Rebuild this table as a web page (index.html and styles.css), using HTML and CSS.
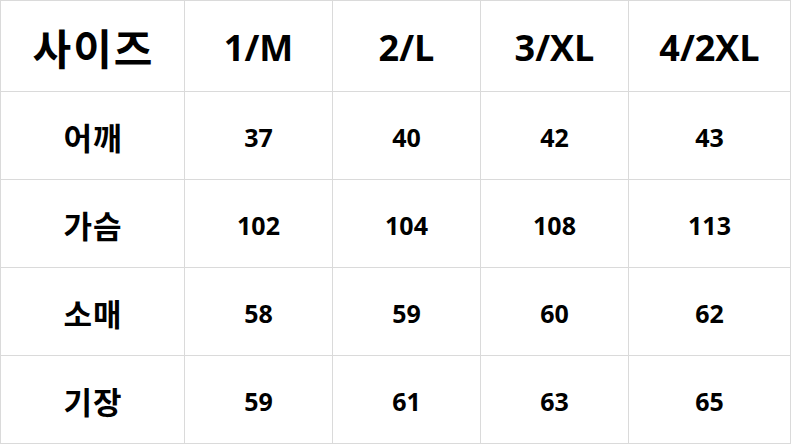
FILE: index.html
```html
<!DOCTYPE html>
<html lang="ko">
<head>
<meta charset="utf-8">
<title>사이즈</title>
<link rel="stylesheet" href="styles.css">
</head>
<body>
<table class="size-table">
  <colgroup>
    <col class="c-label">
    <col class="c-size">
    <col class="c-size">
    <col class="c-size">
    <col class="c-last">
  </colgroup>
  <tr class="head-row">
    <th class="ko-head">사이즈</th>
    <th>1/M</th>
    <th>2/L</th>
    <th>3/XL</th>
    <th>4/2XL</th>
  </tr>
  <tr class="body-row">
    <th class="ko-label">어깨</th>
    <td>37</td><td>40</td><td>42</td><td>43</td>
  </tr>
  <tr class="body-row">
    <th class="ko-label">가슴</th>
    <td>102</td><td>104</td><td>108</td><td>113</td>
  </tr>
  <tr class="body-row">
    <th class="ko-label">소매</th>
    <td>58</td><td>59</td><td>60</td><td>62</td>
  </tr>
  <tr class="body-row">
    <th class="ko-label">기장</th>
    <td>59</td><td>61</td><td>63</td><td>65</td>
  </tr>
</table>
</body>
</html>
```
FILE: styles.css
```css
html, body {
  margin: 0;
  padding: 0;
  background: #ffffff;
}

.size-table {
  border-collapse: collapse;
  table-layout: fixed;
  width: 790px;
  font-family: "Open Sans", "Noto Sans CJK KR", sans-serif;
  font-weight: 700;
  color: #000000;
}

.c-label { width: 184px; }
.c-size { width: 148px; }
.c-last { width: 162px; }

.size-table th,
.size-table td {
  border: 1px solid #dadada;
  text-align: center;
  vertical-align: middle;
  padding: 0;
  font-weight: 700;
}

.head-row { height: 91px; }
.body-row { height: 88px; }

.head-row th {
  font-size: 36px;
  padding-top: 2px;
}

.head-row th.ko-head {
  font-family: "Noto Sans CJK KR", sans-serif;
  font-size: 42px;
  letter-spacing: 2px;
  padding-left: 2px;
  padding-top: 0;
}

.body-row td {
  font-size: 25px;
  padding-top: 3px;
}

.body-row th.ko-label {
  font-family: "Noto Sans CJK KR", sans-serif;
  font-size: 31px;
  letter-spacing: 1px;
  padding-left: 1px;
  padding-top: 2px;
}
```
